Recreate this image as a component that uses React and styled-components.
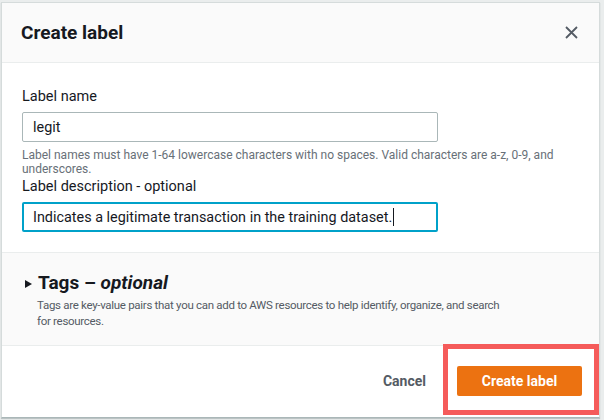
import React from "react";
import styled, { createGlobalStyle } from "styled-components";

const Global = createGlobalStyle`
  html, body { margin: 0; padding: 0; background: #eaeded; }
  body { font-family: Roboto, "Liberation Sans", Arial, sans-serif; color: #16191f; }
  * { box-sizing: border-box; }
`;

const Page = styled.div`
  width: 604px;
  height: 420px;
  padding: 2px 4px 2px 1px;
  background: #eaeded;
`;

const Dialog = styled.div`
  width: 599px;
  height: 416px;
  display: flex;
  flex-direction: column;
  background: #fff;
  border: 1px solid #d5dbdb;
  border-bottom-color: #aab7b8;
  box-shadow: 0 1px 1px rgba(0, 28, 36, 0.2);
`;

const Header = styled.div`
  height: 60px;
  flex: none;
  display: flex;
  align-items: center;
  justify-content: space-between;
  padding: 0 21px 0 19px;
  background: #fafafa;
  border-bottom: 1px solid #eaeded;
`;

const Title = styled.h2`
  margin: 0;
  font-size: 19px;
  font-weight: 700;
  line-height: 22px;
  color: #16191f;
`;

const CloseButton = styled.button`
  border: 0;
  background: none;
  padding: 0;
  width: 14px;
  height: 14px;
  display: flex;
  align-items: center;
  justify-content: center;
  color: #545b64;
  cursor: pointer;
`;

const Body = styled.div`
  flex: none;
  padding: 24px 20px 20px 20px;
  display: flex;
  flex-direction: column;
  border-bottom: 1px solid #eaeded;
`;

const Label = styled.label`
  font-size: 14.5px;
  line-height: 20px;
  color: #16191f;
  margin-bottom: 5px;
`;

const Input = styled.div`
  width: 416px;
  height: 30px;
  display: flex;
  align-items: center;
  padding: 0 ${(p) => (p.$focused ? 9 : 10)}px;
  border: ${(p) => (p.$focused ? "2px solid #00a1c9" : "1px solid #aab7b8")};
  border-radius: 2px;
  font-size: 14.4px;
  color: #16191f;
  background: #fff;
`;

const Caret = styled.span`
  display: inline-block;
  width: 1px;
  height: 18px;
  background: #16191f;
  margin-left: 1px;
`;

const Hint = styled.div`
  margin-top: 6px;
  font-size: 12px;
  line-height: 14px;
  color: #687078;
  margin-bottom: 1px;
  max-width: 545px;
`;

const Tags = styled.div`
  flex: none;
  height: 93px;
  background: #fafafa;
  border-bottom: 1px solid #eaeded;
  padding: 18px 20px 0 22px;
`;

const TagsTitle = styled.div`
  display: flex;
  align-items: center;
  gap: 6px;
  font-size: 19px;
  font-weight: 700;
  line-height: 24px;
  color: #16191f;
  em { font-style: italic; }
`;

const Triangle = styled.span`
  width: 0;
  height: 0;
  border-top: 4.5px solid transparent;
  border-bottom: 4.5px solid transparent;
  border-left: 7.5px solid #16191f;
  margin-left: 1px;
  margin-top: 1px;
`;

const TagsDesc = styled.p`
  margin: 2px 0 0 13px;
  font-size: 11.5px;
  letter-spacing: -0.3px;
  line-height: 16px;
  color: #545b64;
  max-width: 470px;
`;

const Footer = styled.div`
  position: relative;
  flex: 1;
  display: flex;
  align-items: center;
  justify-content: flex-end;
  gap: 31px;
  padding: 0 17px 2px 0;
  background: #fff;
`;

const LinkButton = styled.button`
  border: 0;
  background: none;
  padding: 0;
  font-family: inherit;
  font-size: 14px;
  font-weight: 700;
  color: #545b64;
  cursor: pointer;
`;

const PrimaryButton = styled.button`
  width: 125px;
  height: 30px;
  border: 0;
  border-radius: 2px;
  background: #ec7211;
  color: #fff;
  font-family: inherit;
  font-size: 14px;
  font-weight: 700;
  cursor: pointer;
`;

const Highlight = styled.div`
  position: absolute;
  left: 441px;
  top: -2px;
  width: 156px;
  height: 71px;
  border: 5px solid #f55b5a;
  pointer-events: none;
`;

export default function App() {
  return (
    <>
      <Global />
      <Page>
        <Dialog>
          <Header>
            <Title>Create label</Title>
            <CloseButton aria-label="Close">
              <svg width="13" height="13" viewBox="0 0 13 13">
                <path d="M1 1L12 12M12 1L1 12" stroke="currentColor" strokeWidth="1.8" fill="none" />
              </svg>
            </CloseButton>
          </Header>
          <Body>
            <Label>Label name</Label>
            <Input>legit</Input>
            <Hint>
              Label names must have 1-64 lowercase characters with no spaces. Valid characters are a-z, 0-9, and underscores.
            </Hint>
            <Label>Label description - optional</Label>
            <Input $focused>
              Indicates a legitimate transaction in the training dataset.
              <Caret />
            </Input>
          </Body>
          <Tags>
            <TagsTitle>
              <Triangle />
              <span>
                Tags – <em>optional</em>
              </span>
            </TagsTitle>
            <TagsDesc>
              Tags are key-value pairs that you can add to AWS resources to help identify, organize, and search for resources.
            </TagsDesc>
          </Tags>
          <Footer>
            <LinkButton>Cancel</LinkButton>
            <PrimaryButton>Create label</PrimaryButton>
            <Highlight />
          </Footer>
        </Dialog>
      </Page>
    </>
  );
}
